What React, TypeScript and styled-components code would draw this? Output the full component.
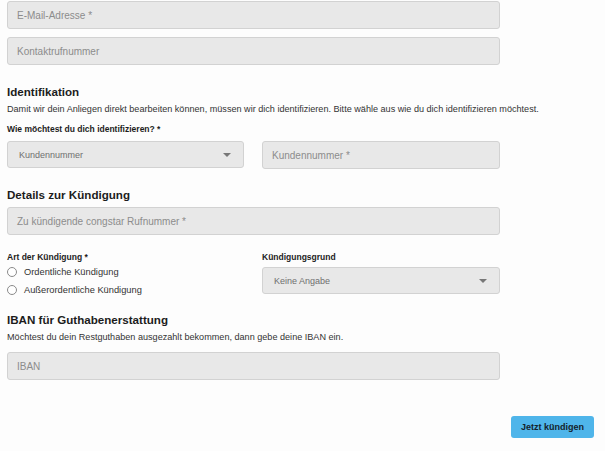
import React from "react";
import styled, { createGlobalStyle } from "styled-components";

const GlobalStyle = createGlobalStyle`
  html, body {
    margin: 0;
    padding: 0;
    background: #fdfdfd;
    font-family: "Liberation Sans", Arial, sans-serif;
    color: #222;
  }
`;

const Page = styled.div`
  width: 605px;
  height: 451px;
  overflow: hidden;
  box-sizing: border-box;
  padding: 1px 11px 0 7px;
`;

const Form = styled.div`
  width: 493px;
  display: flex;
  flex-direction: column;
`;

const Field = styled.div<{ $mt?: number }>`
  height: 28px;
  box-sizing: border-box;
  margin-top: ${(p) => p.$mt ?? 0}px;
  background: #e8e8e8;
  border: 1px solid #d2d2d2;
  border-radius: 3px;
  display: flex;
  align-items: center;
  justify-content: space-between;
  padding: 0 12px 0 9px;
  font-size: 10px;
  color: #8c8c8c;
`;

const SelectField = styled(Field)`
  height: 27px;
  font-size: 9px;
  color: #6f6f6f;
  padding-left: 11px;
`;

const Arrow = styled.span`
  width: 0;
  height: 0;
  border-left: 4px solid transparent;
  border-right: 4px solid transparent;
  border-top: 4px solid #777;
`;

const Heading = styled.h2<{ $mt: number }>`
  margin: ${(p) => p.$mt}px 0 0;
  font-size: 11.6px;
  line-height: 14px;
  font-weight: 700;
  color: #1c1c1c;
`;

const Text = styled.p<{ $mt: number }>`
  margin: ${(p) => p.$mt}px 0 0;
  font-size: 9.1px;
  line-height: 12px;
  color: #333;
  white-space: nowrap;
`;

const Label = styled.div<{ $mt: number }>`
  margin-top: ${(p) => p.$mt}px;
  font-size: 8.5px;
  line-height: 12px;
  font-weight: 700;
  color: #1c1c1c;
`;

const Columns = styled.div<{ $mt: number }>`
  margin-top: ${(p) => p.$mt}px;
  display: grid;
  grid-template-columns: 237px 238px;
  column-gap: 18px;
  align-items: start;
`;

const Column = styled.div`
  display: flex;
  flex-direction: column;
`;

const RadioRow = styled.label`
  height: 18px;
  display: flex;
  align-items: center;
  gap: 7px;
  font-size: 9.3px;
  color: #333;
`;

const RadioDot = styled.span`
  width: 10px;
  height: 10px;
  box-sizing: border-box;
  border: 1px solid #8a8a8a;
  border-radius: 50%;
  background: #fff;
`;

const Footer = styled.div`
  width: 587px;
  margin-top: 36px;
  display: flex;
  justify-content: flex-end;
`;

const SubmitButton = styled.button`
  width: 83px;
  height: 22px;
  border: none;
  border-radius: 3px;
  background: #4fb5ea;
  color: #14222c;
  font-family: "Liberation Sans", Arial, sans-serif;
  font-size: 9px;
  font-weight: 700;
  padding: 0;
  cursor: pointer;
`;

export default function App() {
  return (
    <>
      <GlobalStyle />
      <Page>
        <Form>
          <Field>E-Mail-Adresse *</Field>
          <Field $mt={8}>Kontaktrufnummer</Field>

          <Heading $mt={20}>Identifikation</Heading>
          <Text $mt={4}>
            Damit wir dein Anliegen direkt bearbeiten können, müssen wir dich identifizieren. Bitte
            wähle aus wie du dich identifizieren möchtest.
          </Text>
          <Label $mt={8}>Wie möchtest du dich identifizieren? *</Label>
          <Columns $mt={6}>
            <SelectField>
              Kundennummer
              <Arrow />
            </SelectField>
            <Field>Kundennummer *</Field>
          </Columns>

          <Heading $mt={19}>Details zur Kündigung</Heading>
          <Field $mt={5}>Zu kündigende congstar Rufnummer *</Field>

          <Columns $mt={16}>
            <Column>
              <Label $mt={0}>Art der Kündigung *</Label>
              <RadioRow>
                <RadioDot />
                Ordentliche Kündigung
              </RadioRow>
              <RadioRow>
                <RadioDot />
                Außerordentliche Kündigung
              </RadioRow>
            </Column>
            <Column>
              <Label $mt={0}>Kündigungsgrund</Label>
              <SelectField style={{ marginTop: 4 }}>
                Keine Angabe
                <Arrow />
              </SelectField>
            </Column>
          </Columns>

          <Heading $mt={14}>IBAN für Guthabenerstattung</Heading>
          <Text $mt={4}>
            Möchtest du dein Restguthaben ausgezahlt bekommen, dann gebe deine IBAN ein.
          </Text>
          <Field $mt={9}>IBAN</Field>
        </Form>
        <Footer>
          <SubmitButton>Jetzt kündigen</SubmitButton>
        </Footer>
      </Page>
    </>
  );
}
